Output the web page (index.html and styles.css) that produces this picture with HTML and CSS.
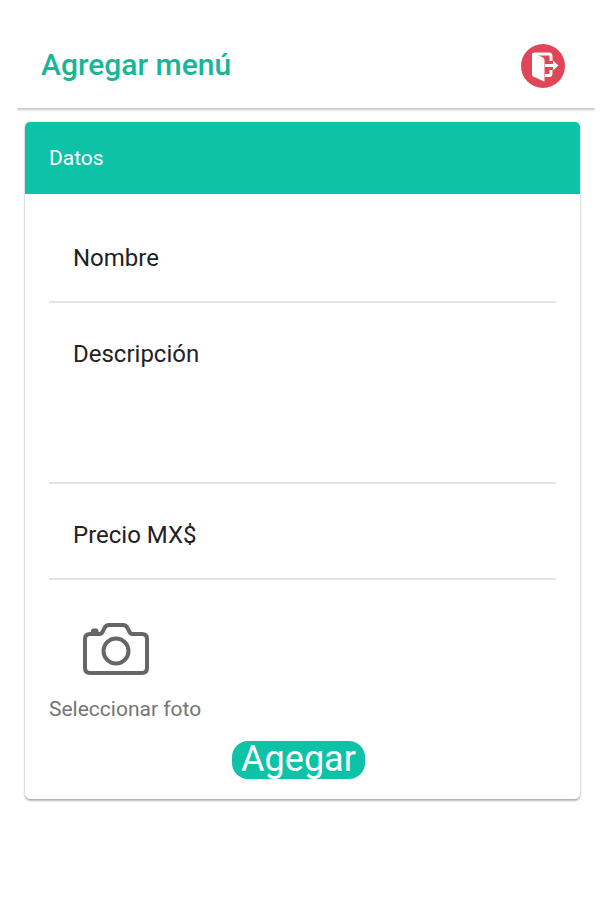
FILE: index.html
```html
<!DOCTYPE html>
<html lang="es">
<head>
    <meta charset="UTF-8">
    <meta name="viewport" content="width=device-width, initial-scale=1.0">
    <title>Agregar menú</title>
    <link rel="stylesheet" href="styles.css">
</head>
<body>
    <header class="toolbar">
        <h1>Agregar menú</h1>
        <button type="button" class="logout-btn" aria-label="Salir">
            <svg viewBox="0 0 44 44" width="44" height="44">
                <circle cx="22" cy="22" r="22" fill="#e04558"/>
                <path d="M13 10H28Q30 10 30 12V17M30 26V29.500Q30 31.500 28 31.500H24" fill="none" stroke="#fff" stroke-width="3"/>
                <path d="M11 9.500Q11 8.500 12.500 9L22 13.500Q23.500 14.500 23.500 16V36.500Q23.500 38 22 37L12 32.500Q11 32 11 30.500Z" fill="#fff"/>
                <path d="M24 20H32V16.500L37.500 21.500L32 26.500V23H24Z" fill="#fff"/>
            </svg>
        </button>
    </header>

    <main>
        <form class="card">
            <h2 class="card-header">Datos</h2>
            <div class="card-content">
                <div class="field">
                    <label for="nombre">Nombre</label>
                    <input type="text" id="nombre">
                </div>
                <div class="field">
                    <label for="descripcion">Descripción</label>
                    <textarea id="descripcion"></textarea>
                </div>
                <div class="field">
                    <label for="precio">Precio MX$</label>
                    <input type="text" id="precio" inputmode="decimal">
                </div>

                <button type="button" class="photo-btn">
                    <svg viewBox="0 0 66 52" width="66" height="52" fill="none" stroke="#666" stroke-width="4">
                        <path d="M8 10V8Q8 5.500 10.500 5.500H13Q15.500 5.500 15.500 8V10Z" fill="#666" stroke="none"/>
                        <path d="M7 11H16Q18.500 11 19.500 9L21.500 5Q23 2 26 2H40Q43 2 44.500 5L46.500 9Q47.500 11 50 11H59Q64 11 64 16V45Q64 50 59 50H7Q2 50 2 45V16Q2 11 7 11Z"/>
                        <circle cx="33" cy="28" r="12.500"/>
                    </svg>
                    <span>Seleccionar foto</span>
                </button>

                <button type="submit" class="submit-btn">Agegar</button>
            </div>
        </form>
    </main>
</body>
</html>
```

FILE: styles.css
```css
* {
    margin: 0;
    padding: 0;
    box-sizing: border-box;
}

body {
    font-family: Roboto, "Liberation Sans", sans-serif;
    background: #fff;
    padding: 24px 17px;
}

button,
input,
textarea {
    font: inherit;
    border: none;
    background: none;
}

button {
    cursor: pointer;
}

.toolbar {
    display: flex;
    align-items: center;
    justify-content: space-between;
    height: 84px;
    padding: 0 30px 0 24px;
    box-shadow: 0 2px 2px rgba(0, 0, 0, 0.22);
    clip-path: inset(0 0 -8px 0);
}

.toolbar h1 {
    padding-bottom: 4px;
    font-size: 30px;
    font-weight: 500;
    color: #15b795;
}

.logout-btn {
    display: flex;
    border-radius: 50%;
}

.card {
    margin: 14px 15px 0 8px;
    border-radius: 5px;
    overflow: hidden;
    box-shadow: 0 2px 2px rgba(0, 0, 0, 0.25), 0 0 3px rgba(0, 0, 0, 0.18);
}

.card-header {
    padding: 0 24px;
    background: #0dc2a7;
    color: #fff;
    font-size: 21px;
    font-weight: 400;
    line-height: 72px;
}

.card-content {
    display: flex;
    flex-direction: column;
    padding: 13px 24px 20px;
}

.field {
    display: flex;
    gap: 16px;
    padding: 37px 24px 29px;
    border-bottom: 2px solid #e4e4e4;
    font-size: 24px;
    line-height: 28px;
    color: #222;
}

.field input,
.field textarea {
    flex: 1;
    min-width: 0;
    outline: none;
}

.field input {
    height: 28px;
}

.field textarea {
    height: 113px;
    resize: none;
}

.photo-btn {
    display: flex;
    flex-direction: column;
    align-items: flex-start;
    align-self: flex-start;
    gap: 20px;
    padding-top: 43px;
    color: #757575;
    font-size: 21px;
    line-height: 28px;
}

.photo-btn svg {
    margin-left: 34px;
}

.submit-btn {
    align-self: center;
    margin: 18px 8px 0 0;
    padding: 0 9px 2px;
    border-radius: 16px;
    background: #0dc2a7;
    color: #fff;
    font-size: 36px;
    line-height: 36px;
}
```
